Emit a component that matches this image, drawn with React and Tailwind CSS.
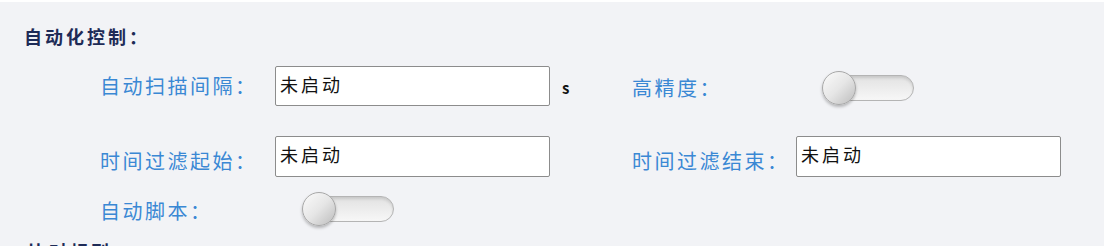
import React from "react";

const font = { fontFamily: '"Noto Sans CJK SC", "Noto Sans", sans-serif' };

function Label({ children, w, extra = "" }) {
  return (
    <div
      className={`${w} ${extra} shrink-0 text-[20px] leading-[26px] tracking-[2.5px] text-[#3a88d4]`}
    >
      {children}
    </div>
  );
}

function TextBox({ w, h, value }) {
  return (
    <div
      className={`${w} ${h} shrink-0 flex items-center bg-white border border-[#8c8c8c] rounded-[2px] pl-[4px] pb-[4px] text-[18px] tracking-[3px] text-[#111]`}
    >
      {value}
    </div>
  );
}

function Toggle() {
  return (
    <div className="relative w-[92px] h-[34px] shrink-0">
      <div className="absolute left-[12px] right-0 top-[4px] h-[26px] rounded-full border border-[#b4b4b4] bg-gradient-to-b from-[#e2e2e2] to-[#f7f7f7] shadow-[inset_0_2px_3px_rgba(0,0,0,0.12)]" />
      <div className="absolute left-0 top-0 w-[34px] h-[34px] rounded-full border border-[#a8a8a8] bg-gradient-to-br from-[#fbfbfb] via-[#e6e6e6] to-[#bdbdbd] shadow-[0_2px_3px_rgba(0,0,0,0.25)]" />
    </div>
  );
}

export default function App() {
  return (
    <div className="w-[1108px] h-[246px] overflow-hidden bg-white" style={font}>
      <div className="mt-[2px] mr-[4px] h-[280px] bg-[#f2f3f6] pt-[21px]">
        <div className="pl-[24px] text-[18px] leading-[26px] font-bold tracking-[3px] text-[#1e2b57]">
          自动化控制：
        </div>

        <div className="mt-[17px] flex items-center pl-[100px] h-[40px]">
          <Label w="w-[175px]">自动扫描间隔：</Label>
          <TextBox w="w-[275px]" h="h-[40px]" value="未启动" />
          <div className="w-[82px] shrink-0 pl-[12px] pt-[4px] text-[15px] font-semibold text-[#111]">
            s
          </div>
          <Label w="w-[164px]" extra="pt-[4px]">高精度：</Label>
          <div className="pl-[26px] pt-[3px]">
            <Toggle />
          </div>
        </div>

        <div className="mt-[30px] flex items-center pl-[100px] h-[41px]">
          <Label w="w-[175px]" extra="pt-[8px]">时间过滤起始：</Label>
          <TextBox w="w-[275px]" h="h-[41px]" value="未启动" />
          <div className="w-[82px] shrink-0" />
          <Label w="w-[164px]" extra="pt-[8px]">时间过滤结束：</Label>
          <TextBox w="w-[265px]" h="h-[41px]" value="未启动" />
        </div>

        <div className="mt-[15px] flex items-center pl-[100px] h-[34px]">
          <Label w="w-[202px]" extra="pt-[4px]">自动脚本：</Label>
          <Toggle />
        </div>

        <div className="mt-[12px] pl-[28px] text-[18px] leading-[26px] font-bold tracking-[3px] text-[#1e2b57]">
          比对规则：
        </div>
      </div>
    </div>
  );
}
